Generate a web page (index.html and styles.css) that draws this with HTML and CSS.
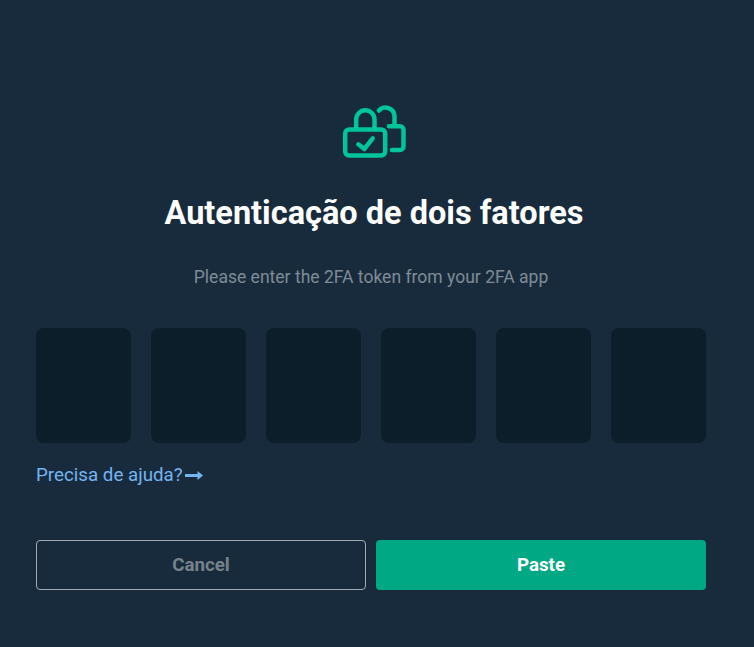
FILE: index.html
```html
<!DOCTYPE html>
<html lang="en">
<head>
    <meta charset="UTF-8">
    <meta name="viewport" content="width=device-width, initial-scale=1.0">
    <title>2FA</title>
    <link rel="stylesheet" href="styles.css">
</head>
<body>
    <div class="container">
        <svg class="lock-icon" width="66" height="56" viewBox="0 0 66 56" fill="none" stroke="#00c49c" stroke-width="4.5" stroke-linecap="round" stroke-linejoin="round">
            <!-- front lock -->
            <rect x="4.200" y="25.500" width="40" height="26" rx="4"/>
            <path d="M15.200 25V15.500a9.150 9.150 0 0 1 18.300 0V25"/>
            <path d="M17.300 40.300l6 4.700 8.400-10.700"/>
            <!-- back lock -->
            <path d="M38 6.500A9 9 0 0 1 53.500 12V21"/>
            <path d="M48 22.300H59a3.500 3.500 0 0 1 3.500 3.500V42.500a3.500 3.500 0 0 1-3.500 3.500H51"/>
        </svg>

        <h2>Autenticação de dois fatores</h2>
        <p class="subtitle">Please enter the 2FA token from your 2FA app</p>

        <div class="token-group">
            <input type="text" class="token-box" maxlength="1">
            <input type="text" class="token-box" maxlength="1">
            <input type="text" class="token-box" maxlength="1">
            <input type="text" class="token-box" maxlength="1">
            <input type="text" class="token-box" maxlength="1">
            <input type="text" class="token-box" maxlength="1">
        </div>

        <a class="help-link" href="#">Precisa de ajuda?<svg width="18" height="9" viewBox="0 0 18 9" fill="#74b4f0"><path d="M0 3H12.500V0L18 4.500L12.500 9V6H0z"/></svg></a>

        <div class="button-row">
            <button class="btn btn-cancel">Cancel</button>
            <button class="btn btn-paste">Paste</button>
        </div>
    </div>
</body>
</html>
```

FILE: styles.css
```css
html, body {
    height: 100%;
}
body {
    font-family: Roboto, 'Liberation Sans', sans-serif;
    background-color: #172b3d;
    margin: 0;
    padding: 0;
}
.container {
    display: flex;
    flex-direction: column;
    align-items: center;
    padding: 104px 48px 0 36px;
}
.lock-icon {
    display: block;
    margin-left: 6px;
}
h2 {
    margin: 33px 0 0 6px;
    font-size: 32.5px;
    line-height: 40px;
    font-weight: 700;
    color: #fff;
}
.subtitle {
    margin: 33px 0 0 0;
    font-size: 17.55px;
    line-height: 22px;
    color: #7f8b96;
}
.token-group {
    display: flex;
    gap: 20px;
    margin-top: 40px;
    align-self: flex-start;
}
.token-box {
    width: 95px;
    height: 115px;
    box-sizing: border-box;
    background-color: #0d1e2b;
    border: none;
    border-radius: 8px;
    padding: 0;
    outline: none;
}
.help-link {
    display: flex;
    align-items: center;
    gap: 2px;
    align-self: flex-start;
    margin-top: 21px;
    font-size: 18.75px;
    line-height: 22px;
    color: #74b4f0;
    text-decoration: none;
}
.button-row {
    display: flex;
    gap: 10px;
    margin-top: 54px;
    align-self: flex-start;
}
.btn {
    width: 330px;
    height: 50px;
    box-sizing: border-box;
    border-radius: 4px;
    padding: 0 0 1px;
    font-family: inherit;
    font-size: 18.75px;
    font-weight: 700;
    cursor: pointer;
}
.btn-cancel {
    background-color: transparent;
    border: 1px solid #a3abb2;
    color: #76818b;
}
.btn-paste {
    background-color: #00a884;
    border: none;
    color: #fff;
}
```
